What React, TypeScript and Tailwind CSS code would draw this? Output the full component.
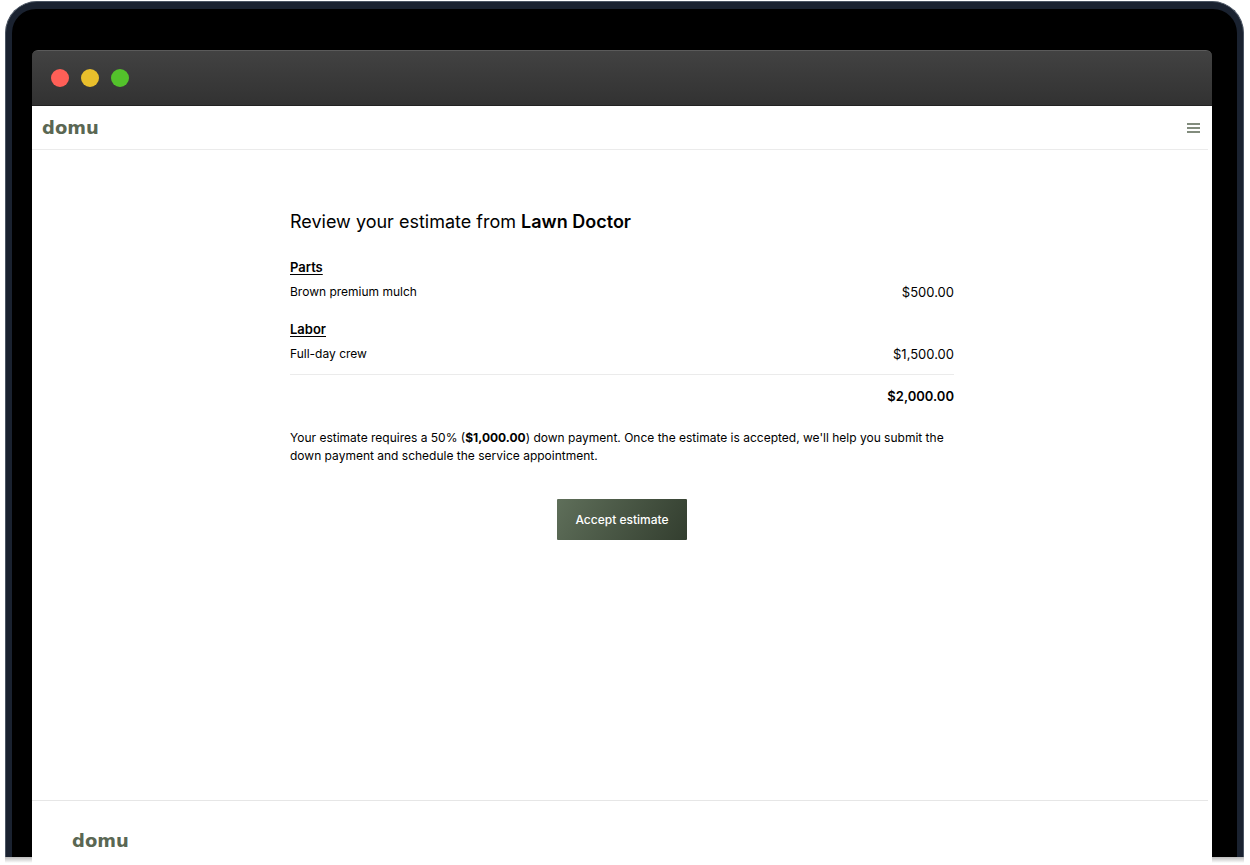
type LineItem = {
  name: string;
  price: string;
};

type Section = {
  title: string;
  items: LineItem[];
};

const sections: Section[] = [
  { title: 'Parts', items: [{ name: 'Brown premium mulch', price: '$500.00' }] },
  { title: 'Labor', items: [{ name: 'Full-day crew', price: '$1,500.00' }] },
];

function Logo() {
  return (
    <a
      href="#"
      className="block [font-family:'DejaVu_Sans',sans-serif] text-lg leading-6 font-bold text-[#5a6753]"
    >
      domu
    </a>
  );
}

function TitleBar() {
  return (
    <div className="flex h-14 items-center gap-3 rounded-t-md border-t border-b border-t-[#5a5a5a] border-b-[#222222] bg-linear-to-b from-[#424242] to-[#323232] px-[19px]">
      <span className="size-[18px] rounded-full bg-[#ff5f57]" />
      <span className="size-[18px] rounded-full bg-[#e9bf2c]" />
      <span className="size-[18px] rounded-full bg-[#53c22b]" />
    </div>
  );
}

function Header() {
  return (
    <header className="mr-1 flex h-11 items-center justify-between border-b border-[#ebebeb] pr-2 pl-2.5">
      <Logo />
      <button type="button" aria-label="Menu" className="text-[#5a6753]">
        <svg width="13" height="10" viewBox="0 0 13 10" fill="none" stroke="currentColor">
          <path d="M0 1h13M0 5h13M0 9h13" strokeWidth="1.5" />
        </svg>
      </button>
    </header>
  );
}

function Estimate() {
  return (
    <main className="mx-auto w-full max-w-[664px] flex-1 pt-[58px] text-[13px] leading-[18px]">
      <h1 className="text-lg leading-7">
        Review your estimate from <span className="font-semibold">Lawn Doctor</span>
      </h1>
      <table className="mt-[22px] w-full">
        {sections.map((section) => (
          <tbody key={section.title}>
            <tr className="h-[25px] align-top">
              <th
                colSpan={2}
                scope="rowgroup"
                className="text-left text-[13px] font-semibold underline underline-offset-2"
              >
                {section.title}
              </th>
            </tr>
            {section.items.map((item) => (
              <tr key={item.name} className="h-[37px] align-top">
                <td className="text-xs leading-[18px]">{item.name}</td>
                <td className="text-right">{item.price}</td>
              </tr>
            ))}
          </tbody>
        ))}
      </table>
      <div className="-mt-2 border-t border-[#ebebeb] pt-3 text-right font-semibold">
        $2,000.00
      </div>
      <p className="mt-6 text-xs leading-[18px]">
        Your estimate requires a 50% (<span className="font-bold">$1,000.00</span>) down payment.
        Once the estimate is accepted, we'll help you submit the down payment and schedule the
        service appointment.
      </p>
      <div className="mt-[34px] flex justify-center">
        <button
          type="button"
          className="h-[41px] rounded-[1px] bg-linear-120 from-[#5f6f5a] to-[#333e2f] px-[18px] text-xs font-medium text-white"
        >
          Accept estimate
        </button>
      </div>
    </main>
  );
}

function Footer() {
  return (
    <footer className="mr-1 border-t border-[#e6e6e6] pt-7 pb-1 pl-10">
      <Logo />
    </footer>
  );
}

export default function App() {
  return (
    <div className="flex min-h-screen flex-col bg-white pt-px pr-1.5 pl-[5px] [font-family:Inter,sans-serif] text-black">
      <div className="flex flex-1 flex-col rounded-t-[32px] border-x border-t border-[#4b5563] bg-[#1a2230] px-1.5 pt-[7px]">
        <div className="flex flex-1 flex-col rounded-t-[24px] bg-black pt-[41px] pr-[25px] pl-5">
          <TitleBar />
          <div className="flex flex-1 flex-col bg-white">
            <Header />
            <Estimate />
            <Footer />
          </div>
        </div>
      </div>
      {/* shadow under the two bottom ends of the bezel */}
      <div className="flex h-2 justify-between">
        <span className="h-1.5 w-[27px] bg-linear-to-b from-[#bdbdbd] to-white" />
        <span className="h-1.5 w-8 bg-linear-to-b from-[#bdbdbd] to-white" />
      </div>
    </div>
  );
}
